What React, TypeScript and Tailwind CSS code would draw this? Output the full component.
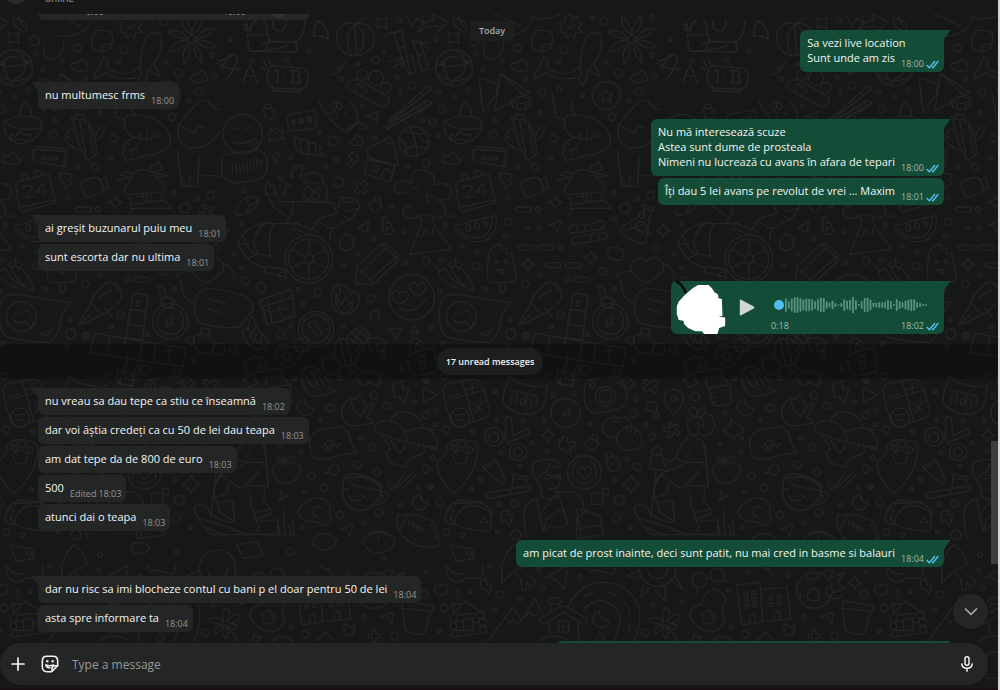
import React from "react";

type Circle = [number, number, number];

const spark = (x: number, y: number, s: number) => {
  const k = Math.round(s * 0.25);
  return `M${x} ${y - s}Q${x + k} ${y - k} ${x + s} ${y}Q${x + k} ${y + k} ${x} ${y + s}Q${x - k} ${y + k} ${x - s} ${y}Q${x - k} ${y - k} ${x} ${y - s}Z`;
};

/* Each sheet of the wallpaper is drawn at three times its final size. */
const topCircles: Circle[] = [
  [209, 62, 7], [319, 118, 6], [162, 154, 6], [137, 180, 11], [83, 193, 6], [438, 162, 6], [517, 183, 6],
  [562, 144, 11], [701, 149, 11], [787, 55, 6], [822, 64, 12], [828, 184, 6], [686, 183, 6], [459, 209, 6],
  [585, 238, 6], [638, 278, 11], [687, 266, 6], [865, 219, 12], [966, 164, 6], [202, 231, 6], [247, 257, 11],
  [211, 278, 6], [34, 237, 6], [415, 269, 6], [373, 291, 6], [328, 276, 6], [758, 286, 6], [926, 274, 11],
  [897, 302, 6], [976, 230, 6], [372, 203, 55], [829, 286, 42], [905, 118, 10], [96, 225, 16], [138, 234, 22],
  [168, 263, 16], [967, 50, 6], [434, 122, 15], [338, 188, 6], [408, 188, 6], [765, 149, 1],
];
const topPaths: string[] = [
  "M75 72C40 60 18 85 20 115C22 150 50 170 80 166C115 165 135 140 132 110C128 80 105 65 75 72ZM75 72C50 90 45 140 66 166M75 72C75 110 78 140 80 166M75 72C110 90 110 140 80 166M70 72Q85 62 104 74M88 66Q95 50 116 54",
  "M0 228Q35 215 46 186Q40 200 20 206",
  "M140 53Q156 62 172 53Q164 70 172 85Q156 78 140 85Q147 70 140 53Z",
  "M355 97Q371 106 388 97Q380 114 388 130Q371 123 355 130Q362 114 355 97Z",
  "M228 42L245 76L262 55L283 70L275 42M262 97Q280 60 312 62L310 42L352 66L325 94L322 78Q290 76 262 97Z",
  "M368 58Q372 84 400 92Q416 90 408 76Q395 50 368 58ZM382 42L400 78",
  "M160 112Q185 95 215 92L240 220L258 216L246 165L228 170M215 92L192 100L205 145L222 140M205 145L236 225L240 220M246 122L264 165L282 158L268 125ZM264 165L275 214L294 206L282 158M246 122L298 130L268 125L296 145M178 185L218 172L190 202L224 184L212 206",
  "M318 190Q370 212 426 180M325 225Q380 260 424 225M338 188Q345 230 372 257M408 188Q400 160 372 148M338 188Q370 150 408 188M352 250Q410 230 408 188",
  "M463 127Q462 150 460 165Q472 185 500 174Q522 160 522 120M490 42Q540 60 570 78M500 108Q560 115 590 85Q605 70 608 42M608 52Q650 65 690 42",
  "M620 92Q665 85 668 108Q670 135 652 152Q622 158 608 145Q596 110 620 92ZM636 152Q634 130 668 130",
  "M722 42L728 58L744 48L742 66L758 72L746 84L756 98L738 98L734 116L722 104L710 114L706 98L688 96L698 82L688 68L704 66L706 50ZM712 80L720 86L734 74",
  "M905 105Q868 80 876 48Q900 70 905 105ZM905 105Q910 70 934 46Q940 85 905 105ZM915 115Q945 80 976 86Q955 115 915 115ZM915 120Q955 118 978 140Q945 155 915 120ZM910 128Q938 150 936 188Q910 165 910 128ZM900 128Q905 165 882 190Q872 150 900 128ZM895 120Q875 155 838 154Q850 120 895 120ZM895 115Q855 118 834 94Q870 85 895 115Z",
  "M750 200C720 232 680 220 652 204L653 194Q655 178 640 170Q636 190 626 205Q612 220 612 235Q635 230 652 218L656 228Q700 242 745 232Q750 250 758 258Q775 230 772 212Q820 170 814 105Q800 88 770 110Q752 150 750 200ZM790 190Q805 210 808 228Q790 225 776 208M750 190L754 230",
  "M552 210Q542 205 544 196Q548 185 562 190Q570 174 585 182Q592 190 588 196Q598 202 592 212Q560 216 552 210Z",
  "M910 245Q900 240 904 230Q910 222 920 224Q930 206 944 216Q950 222 946 228Q956 232 950 242Q925 252 910 245Z",
  "M448 234L504 252L498 285L458 334ZM448 234L458 325M512 220L600 278L494 332ZM512 220L580 285M544 302C544 285 602 285 602 302L598 322Q572 334 548 322ZM544 302Q572 318 602 302M560 312L560 326M586 312L586 326",
  "M66 240Q48 245 54 268L150 318Q170 325 176 308Q182 292 165 285L88 240ZM75 262C72 250 90 248 92 262C100 252 115 262 108 275L92 290Q76 278 75 262Z",
  "M178 358L295 258Q306 256 304 268L186 362ZM166 382L292 303Q306 300 304 314L172 388ZM238 308L252 322M270 280L282 292M232 340L242 352M262 322L270 334",
  "M828 268L834 280L848 282L838 292L842 305L828 298L816 305L818 292L808 282L822 280Z",
];
const leftTopPaths: string[] = [
  "M741 104L807 104L806 132L798 145L790 152L748 154ZM752 104Q748 65 770 62M800 104Q805 75 790 64M752 86Q738 95 730 85M741 68L741 92M728 72L752 90M818 62Q815 92 840 92Q860 88 858 62M786 138Q795 125 810 124L886 125Q915 110 915 62M886 125L893 155L748 154M860 138Q820 150 790 152",
  "M656 184Q685 175 700 162L710 168M688 162L672 192Q660 205 665 210M650 190Q690 215 722 205M714 172Q700 220 676 240M728 246L750 192L772 246M736 230L764 228",
  "M820 198Q804 200 802 225Q800 260 820 264L906 268Q922 262 924 235Q924 208 905 204ZM820 264L818 272L900 276L904 268M790 184L800 200M808 180L812 192M786 204L796 208M824 216L834 210L832 248M870 214L880 210L876 250M884 214Q904 206 900 224L892 230Q906 236 898 250L882 248M852 222L852 224M850 244L850 246",
  "M942 110Q940 70 955 62Q985 80 985 120Q965 100 942 110Z",
];
const middleCircles: Circle[] = [
  [635, 28, 11], [577, 61, 6], [607, 66, 11], [795, 61, 6], [930, 37, 6], [1146, 51, 11], [971, 114, 11],
  [789, 104, 11], [624, 107, 6], [435, 115, 6], [310, 123, 15], [269, 98, 6], [397, 18, 6], [183, 172, 6],
  [319, 179, 6], [287, 200, 6], [532, 198, 6], [588, 190, 11], [963, 172, 6], [914, 201, 11], [862, 202, 6],
  [152, 234, 6], [44, 273, 6], [484, 318, 6], [326, 247, 15], [832, 295, 6], [923, 328, 7], [669, 348, 6],
  [645, 373, 6], [835, 367, 11], [893, 384, 6], [928, 384, 6], [824, 406, 6], [989, 442, 7], [694, 439, 6],
  [741, 457, 6], [588, 482, 11], [525, 490, 6], [633, 479, 6], [739, 498, 11], [522, 396, 6], [430, 417, 6],
  [383, 462, 6], [341, 498, 6], [36, 370, 6], [13, 462, 6], [36, 502, 6], [46, 543, 11], [93, 562, 15],
  [205, 569, 6], [263, 578, 11], [220, 611, 6], [423, 596, 11], [435, 646, 15], [341, 675, 6], [182, 677, 6],
  [152, 704, 12], [453, 741, 15], [604, 682, 6], [554, 690, 11], [630, 573, 6], [766, 567, 6], [886, 552, 11],
  [931, 524, 6], [1010, 538, 7], [1118, 514, 11], [1153, 568, 6], [991, 645, 11], [963, 680, 6], [840, 659, 6],
  [842, 701, 15], [887, 707, 6], [1072, 703, 6], [1202, 722, 11], [1246, 700, 15], [1287, 747, 18], [1152, 278, 6],
  [1222, 296, 6], [1184, 324, 15], [1153, 357, 6], [1278, 444, 11], [1262, 286, 11],
  [551, 124, 45], [236, 477, 72], [236, 477, 60], [236, 477, 14], [545, 592, 68], [694, 650, 45], [258, 687, 53],
  [258, 687, 42], [1141, 664, 53], [1141, 664, 40], [1132, 608, 14], [257, 288, 12], [438, 204, 9], [1236, 345, 9],
  [1233, 380, 16], [1053, 385, 13], [1094, 412, 13], [158, 528, 12], [38, 102, 59], [761, 173, 6], [779, 174, 6],
  [797, 175, 6], [472, 386, 3], [1256, 398, 3],
];
const middlePaths: string[] = [
  "M6 88Q14 76 26 92M46 90Q54 76 66 86M10 126Q40 140 78 112M60 128L74 148Q88 146 84 130L76 116M72 128L78 138",
  "M-25 170Q-20 160 85 150Q115 160 112 200Q110 232 85 238L20 250Q-10 245 -25 225ZM8 200L8 216M18 190L20 220M28 192L32 222M38 188L42 218M48 178L53 214M58 178L62 210M68 176L72 210M78 172L82 206M88 178L90 200M96 180L98 196",
  "M100 26L104 52Q115 60 132 54L132 26ZM106 26Q105 8 122 14L126 26",
  "M180 42L248 30Q258 34 260 72Q258 84 248 86L186 92Q172 85 172 60Q172 44 180 42ZM190 56L190 74M182 60L198 70M198 60L182 70M214 52L214 72M206 56L222 68M222 56L206 68M238 48L238 68M230 52L246 64M246 52L230 64",
  "M265 0Q290 60 345 96L385 62Q380 20 358 0M325 10Q318 14 320 24Q330 34 338 20Q332 0 314 8Q306 30 322 40M345 96L352 96L384 68L408 76L408 86L388 88M302 18L296 18M304 36L298 40M322 46L322 52M342 38L348 42",
  "M120 84L130 92L140 82L148 92L162 96L155 106L162 118L148 118L140 126L130 118L118 122L120 108L112 100L124 98Z",
  "M192 110Q196 160 216 160L282 168L268 154L274 142L256 142L256 128L238 130L232 118L214 120ZM216 160Q205 140 214 120M232 168Q240 145 232 118M250 168Q262 155 256 142",
  "M360 128Q362 118 374 116Q372 106 382 102Q388 112 390 112Q400 116 396 122Q404 130 394 136L372 136Q358 135 360 128Z",
  "M405 50L444 34L440 66L430 52Z",
  "M466 82L590 0M470 88L604 8M484 60Q470 66 480 58L566 0M520 60L530 70M546 42L556 52M570 22L582 32",
  "M640 65Q636 115 690 132Q745 125 755 82L750 58Q700 35 640 65ZM640 65Q690 100 755 82M690 40Q688 20 706 6Q730 28 722 48Q705 56 690 40ZM662 124L664 100L676 110L690 94L706 106L722 100L720 124M672 120Q692 112 710 122M686 76L686 78M704 82L704 84M726 76L726 78",
  "M730 148L833 155L826 200L734 184Q726 165 730 148ZM733 142L742 140L833 148M833 155L826 155L820 198",
  "M848 60Q870 48 896 70Q920 110 920 160Q905 180 890 178Q868 150 848 60ZM868 58Q880 120 890 178M896 70Q905 120 912 170M846 60L844 50L856 52L858 40L870 46L882 42L880 58M848 86Q835 78 824 114Q832 142 872 150M920 120Q935 120 946 82Q930 70 924 90L916 110M828 108L840 116",
  "M966 -20L975 25L978 52L1005 58L1010 45L1040 45Q1015 30 1030 -5M1040 45Q1120 50 1142 115Q1140 150 1100 160L1008 182Q995 170 1000 140Q1015 115 1040 112Q1075 125 1110 105M1005 58Q995 90 1030 112M1030 170L1020 150L1040 145L1038 135M1050 120L1048 95M1070 120L1072 92M1085 110Q1100 95 1112 96",
  "M408 150L470 116L466 126L478 108L490 124Q496 150 505 198L412 172Q420 165 408 150ZM412 172L404 222L482 245L495 195M454 232Q458 205 472 206Q485 210 480 242M465 120L472 134L490 124M418 178L422 182L426 178L430 184L436 180L440 186L446 182L450 188L458 186L462 190L470 188L476 194L484 192",
  "M514 90Q555 105 592 100M540 82Q560 120 562 168M580 92Q560 120 595 128M520 155Q545 128 592 145M508 116Q530 125 530 165",
  "M640 188Q634 178 642 170Q650 164 658 168Q664 152 678 162Q682 168 680 172Q692 176 688 190Q660 194 640 188Z",
  "M126 166L136 192Q144 196 142 184L138 176L152 164Q148 154 126 166ZM355 168L368 180L352 192L360 202L384 180Q388 162 366 158Z",
  "M186 226L192 196L220 196L214 228M192 204L218 204M186 226Q178 222 180 230Q186 236 188 226M214 228Q206 224 208 232Q214 236 214 228M164 284L170 250L182 262M164 284Q158 278 158 286Q162 292 164 284",
  "M372 248L382 242L393 254L404 242L412 252L402 262L413 272L404 282L393 272L382 282L373 272L384 262Z",
  "M116 290Q105 275 106 256L114 244L120 258L130 256Q140 290 150 305L240 305M240 305L310 308L320 340Q270 350 262 362L245 390M190 308L185 340L166 372M116 290Q120 320 166 345M106 280Q130 290 134 276M228 250Q215 235 228 222Q250 212 262 222Q282 226 276 246Q300 262 288 280Q300 292 286 302L262 308Q234 304 222 286Q218 262 236 262L250 275L268 262M236 262Q228 255 232 246L262 250",
  "M320 340L332 290L382 300L390 324L362 358L344 350M332 290L346 308L378 306M306 380Q300 400 300 420M262 362L304 388L355 360M390 324L350 335",
  "M22 430L38 404Q70 365 130 370L205 372L264 396L258 408L180 384M22 430L50 475Q80 500 110 504L160 505M22 430L48 432L70 460L128 470M38 404L50 430M130 370Q110 420 122 470M50 475L86 462L70 430Q80 380 110 368M100 515L165 532Q175 515 160 508L108 498ZM190 376L200 366L212 378",
  "M236 463L236 417M249 470L288 448M249 485L290 505M236 491L236 537M223 485L184 505M223 470L184 448",
  "M16 340Q20 310 50 292Q80 290 86 300Q80 330 50 340Q25 352 16 340ZM50 292L58 318L86 300M58 318L50 340",
  "M414 312L432 300L454 312L448 332L430 336ZM434 300Q435 286 446 292Q455 298 450 308M456 366L462 402Q475 408 490 396L482 370ZM458 366Q452 350 464 350Q476 356 474 370M384 384L416 364L412 396L398 390Z",
  "M330 420Q345 415 342 402L358 404L372 420L364 432L374 442L350 452L328 444Q335 434 330 420Z",
  "M380 500L450 434Q470 424 500 460Q508 475 500 484L432 552L376 554ZM376 554L380 500L395 515L398 520L412 525L420 540L432 552M398 512L465 445M425 535L500 470M450 434L465 440L500 475M384 545L390 552",
  "M535 276Q490 290 492 258Q506 234 545 250Q540 210 578 210Q622 215 612 255Q655 240 666 275Q662 305 625 300Q655 320 645 345Q620 362 608 345L572 345Q540 365 520 345Q515 310 545 320M590 288Q610 282 620 300M590 288Q590 305 600 312M545 265Q560 265 565 270M572 345L574 372L540 463L665 448L610 372L608 345M562 408L574 412L586 388L598 402L612 402L606 380",
  "M676 248L776 222L796 300L796 308L696 336L688 322ZM688 322L796 300M698 242Q688 225 704 222Q718 226 714 238M738 232Q730 212 746 212Q758 218 754 228M697 264Q712 248 726 262Q728 270 706 292L730 288M758 250L738 278L768 272M758 250L764 285",
  "M810 218L846 224L838 242L848 245L824 268L824 248L812 245Z",
  "M872 250Q876 240 920 232Q935 234 940 270Q938 280 892 292Q880 290 872 250ZM932 240L946 230L955 264L942 268",
  "M1003 265Q1018 250 1030 218Q1060 200 1088 218Q1108 245 1126 262L1124 276L1006 285ZM1020 288L1026 325M1114 280L1118 306M1020 325L1145 325L1124 300L1020 315M1030 325L1014 348M1090 218Q1070 188 1100 195L1104 182L1118 208L1090 216L1134 228L1100 230M1030 222Q1002 210 990 225L1020 232L980 240L1000 250M1056 275L1062 304L1084 300L1080 274M1058 290L1082 288M1070 275L1072 304M1040 290L1052 288",
  "M1212 20L1165 75L1212 100L1225 80L1245 85M1165 75Q1155 120 1195 145L1240 140Q1280 120 1290 90M1162 150L1172 230L1190 260L1222 258L1228 165M1172 230Q1168 260 1190 260M1200 222L1198 256M1228 225L1290 228M1212 20Q1220 0 1255 0Q1260 20 1290 30",
  "M862 322L902 322Q908 328 902 336L862 336Q852 329 862 322ZM868 436L906 436Q914 443 906 450L868 450Q856 443 868 436ZM928 436L966 436Q974 443 966 450L928 450Q916 443 928 436ZM950 488L988 488Q998 495 988 503L950 503Q938 495 950 488ZM1012 488L1050 488Q1060 495 1050 503L1012 503Q1000 495 1012 488ZM1034 532L1072 532Q1084 539 1072 546L1034 546Q1022 539 1034 532Z",
  "M1038 374L1025 376Q1012 385 1022 400L1042 398M1066 376L1118 362Q1128 372 1120 386L1064 396M1080 404L1032 412Q1020 420 1030 434L1082 425M1106 402L1128 398Q1136 406 1128 416L1108 420",
  "M958 374L998 360L980 396L976 380Z",
  spark(976, 308, 20), spark(894, 494, 20), spark(1083, 474, 20), spark(1300, 392, 20),
  "M672 378L798 346Q806 405 760 424Q705 432 672 378ZM684 384Q714 425 762 408Q788 392 786 352M710 390Q705 375 716 374Q726 382 720 394ZM736 384Q732 368 742 368Q752 376 746 388ZM762 378Q756 362 766 362Q774 372 768 380Z",
  "M776 465Q780 434 812 434L816 446L828 446L832 462L845 460L850 475L860 535Q850 548 820 548L780 546Q770 540 772 510ZM808 550L810 575Q818 586 826 572L825 548M795 480L806 486L796 492M830 478L820 484L832 488M800 508Q812 514 826 506M806 512Q808 524 820 520L820 510",
  "M656 492Q668 480 675 488L678 466M656 492L664 504L676 496L688 506L696 496Q690 480 675 488M664 504Q680 550 728 574Q735 550 690 500M628 512Q622 530 640 538Q660 562 690 565M628 512L648 506L654 520Q670 545 700 560M628 512L616 500",
  "M322 550Q300 570 304 610Q315 642 350 644Q385 636 388 595Q384 575 372 572Q368 580 364 584Q355 555 322 550ZM322 550Q340 575 322 590L318 582Q312 625 345 640Q370 630 368 605L358 612Q355 595 345 590Q345 600 332 615Q325 605 322 590",
  "M95 598L184 568L198 650L110 674ZM95 598Q85 602 92 622L188 592M112 592L126 668M152 580L158 605M92 622Q95 635 110 632Q125 640 145 628Q150 625 155 622Q160 632 176 624M100 640L110 674M148 622Q148 650 165 652Q190 650 188 630",
  "M486 590C482 574 502 562 508 582C520 566 542 578 532 596L512 612Q490 605 486 590ZM538 564C536 548 556 540 562 558C574 542 594 552 586 570L568 588Q542 578 538 564ZM504 622Q550 650 586 598",
  "M640 592Q655 580 700 586L840 608L815 645Q808 710 780 726Q740 732 650 710Q625 690 628 640Q630 605 640 592ZM676 640Q684 628 692 642M706 636Q714 626 720 638M668 655Q685 685 724 650M708 668L720 684Q732 678 728 665M748 696L756 705L768 690M760 700L768 708L788 684",
  "M908 595Q910 580 955 546Q985 545 995 575Q1000 600 980 610L945 642Q935 646 905 610ZM905 606Q895 618 890 632L865 672L872 674Q905 660 940 642M870 670L898 645M970 550L990 570M948 625Q960 640 962 650M925 595Q945 580 960 570",
  "M1030 578L1074 586L1054 742L1042 840L1005 835L1014 760M1030 578L1002 736M1022 628L1066 634M1014 672L1060 680M1006 712L1056 720M900 760L914 700L1186 745L1178 800L896 758M960 708L952 766M1098 730L1090 786M1142 738L1134 792M1044 598L1040 620L1050 618M1036 604L1052 606",
  "M1118 592Q1100 575 1104 558Q1114 550 1124 570L1130 594M1150 650L1145 672L1128 680L1132 660ZM1120 618Q1100 600 1122 592L1146 592Q1158 606 1146 620",
  "M1204 510C1198 480 1228 462 1250 484C1270 462 1306 478 1300 512Q1280 535 1252 548Q1215 535 1204 510ZM1158 524L1204 512M1158 524Q1178 540 1176 575Q1195 608 1215 610M1238 568Q1290 560 1365 590Q1400 610 1385 635Q1362 660 1352 680Q1300 690 1230 668Q1205 640 1220 585ZM1252 595L1310 612M1252 625L1290 638M1330 545Q1340 510 1300 490",
  "M1240 312L1270 324L1266 334L1240 324ZM1244 328L1240 345M1262 334L1255 375L1248 428Q1235 440 1168 398Q1168 385 1180 378L1232 345M1180 395L1245 372M1200 376L1240 398",
  "M1142 440L1154 444L1160 440L1168 448L1182 452L1176 480Q1155 485 1134 470Q1130 455 1142 440Z",
  "M38 690Q42 735 80 748Q110 748 116 725L96 700Q75 680 70 652Q60 650 56 675L52 690Q42 675 38 690ZM56 675Q52 700 68 702M75 685L60 710L70 722M84 695L72 718L84 730M96 706L88 724L100 736",
  "M236 680Q232 665 256 664L272 694Q278 708 262 708L240 680M262 648L262 650M282 658L282 660M292 686L292 688M286 712L286 714",
  "M318 780Q305 735 330 715L350 720Q360 690 385 683Q415 680 418 705L400 745L372 790Q340 810 318 780M330 715L345 790M350 720L365 785M365 700L405 732M378 690L415 712M360 715L398 742M400 685L365 735M412 695L380 750",
  "M475 685L518 688L496 718L490 700Z",
  "M160 800Q132 770 138 750Q145 735 165 732L190 745Q205 735 215 740L222 748L204 775Q195 805 160 800M165 732L150 750M178 738L160 765",
];
const bandCircles: Circle[] = [
  [45, 6, 6], [127, 40, 6], [332, 12, 15], [378, 18, 11], [556, 120, 15], [440, 137, 6], [5, 120, 6], [134, 138, 10],
  [80, 153, 6], [284, 184, 6], [322, 50, 6], [64, 86, 10], [620, 60, 6], [650, 130, 11], [700, 90, 6], [820, 60, 11],
  [900, 110, 6], [980, 80, 11], [1060, 130, 6], [1120, 70, 6], [1180, 115, 11], [1270, 80, 6],
];
const bandPaths: string[] = [
  "M24 80Q26 70 92 54Q100 52 104 62L112 118Q112 126 102 128L48 138Q36 138 32 128L22 92ZM36 74Q22 40 40 26Q62 20 74 58M48 68Q40 46 50 40Q60 44 62 64M64 96L60 118L76 114L68 94",
  "M500 85L478 160L516 168L530 105M480 130L524 138",
  "M700 20Q740 0 760 30Q770 60 740 70Q700 70 700 20ZM850 100Q880 70 920 90L910 125L862 130ZM1000 30L1040 20L1050 60L1010 66ZM1090 90Q1120 70 1140 100Q1150 130 1110 136Q1080 120 1090 90ZM1220 30Q1250 10 1280 40Q1270 70 1235 66Z",
];
const lowerCircles: Circle[] = [
  [18, 105, 6], [16, 147, 6], [49, 165, 11], [8, 248, 6], [4, 334, 6], [29, 383, 11], [194, 49, 6], [199, 133, 6],
  [127, 171, 6], [278, 137, 6], [341, 137, 6], [433, 55, 6], [369, 60, 6], [305, 203, 6], [213, 234, 6], [351, 228, 6],
  [270, 275, 6], [153, 315, 7], [123, 343, 6], [208, 388, 6], [254, 386, 11], [50, 472, 11], [203, 469, 6],
  [258, 480, 15], [478, 147, 6], [611, 116, 11], [617, 73, 6], [648, 149, 6], [592, 251, 6], [621, 276, 11],
  [554, 314, 6], [568, 376, 15], [560, 431, 12], [600, 457, 6], [796, 65, 12], [885, 114, 6], [1020, 99, 11],
  [991, 133, 6], [870, 208, 6], [932, 230, 6], [964, 302, 11], [1002, 339, 11], [943, 351, 6], [1102, 269, 11],
  [1144, 216, 11], [1112, 187, 6], [1191, 94, 11], [1152, 61, 11], [1274, 82, 6], [1307, 120, 11], [1307, 282, 11],
  [1161, 291, 11], [1285, 338, 6], [1233, 390, 6], [1168, 412, 12], [1122, 444, 6], [1050, 420, 11], [936, 457, 6],
  [913, 11, 6], [1032, 285, 15], [98, 480, 7], [1320, 336, 6], [407, 114, 44], [526, 64, 30], [526, 64, 20],
  [488, 33, 8], [731, 71, 8], [463, 292, 50], [191, 186, 28], [191, 186, 15], [264, 231, 26], [264, 231, 13],
  [91, 246, 21], [73, 218, 9], [98, 207, 11], [121, 226, 9], [73, 206, 9], [89, 128, 29], [678, 122, 8], [547, 267, 2],
  [154, 442, 2], [170, 440, 2], [162, 430, 2], [1070, 342, 3], [1122, 364, 3], [1306, 18, 6], [1048, 8, 6],
];
const lowerPaths: string[] = [
  spark(354, 180, 20), spark(603, 328, 27), spark(592, 25, 27),
  "M52 26L138 12Q155 12 178 100Q180 125 160 130L85 156Q60 150 40 60Q38 35 52 26ZM96 15L130 135M45 78L165 45M126 24L128 56M110 44L144 36M54 68L88 56M132 84L160 112M156 80L136 115M76 122L104 116M76 136L106 132",
  "M238 4L262 22Q295 30 322 36L352 30L345 75Q340 110 300 118Q240 115 222 85Q215 60 228 38ZM240 46L262 48L256 88M262 50L290 55L288 108M290 55L320 62L318 92M246 60L240 90M270 84Q272 60 285 75Q284 100 270 84M300 65L304 100M240 88Q235 100 240 104",
  "M362 114Q365 76 402 70M420 98Q408 104 400 120L412 124Q424 112 420 98ZM424 84L424 86M436 98L436 100M440 116L440 118M434 134L434 136",
  "M470 22Q480 8 560 8Q592 15 590 80Q585 105 500 114Q470 112 464 80Q460 40 470 22ZM382 -14L430 -6L428 34L384 26Z",
  "M640 18L650 12L662 24L676 12L686 22L674 34L685 44L674 54L662 42L650 52L640 42L652 32Z",
  "M732 120Q700 85 702 65Q705 45 732 44Q760 46 760 72Q756 90 732 120ZM654 80L684 86L678 112L648 104ZM658 184L670 174L680 188L664 198Z",
  "M832 8Q820 25 836 40L848 88Q870 98 905 82L900 30Q890 15 880 8ZM836 40L900 28M840 55L850 54M844 70L858 68M850 82L858 80M832 8L828 -14L868 -20L880 8M760 10L790 0L802 26L778 38Z",
  "M936 0Q935 50 975 66Q1010 60 1038 48L1018 38Q1030 20 1010 12L975 -22Q945 -30 936 0M948 0Q950 25 975 35L995 45M970 5L985 30M985 2L1002 30M1102 0Q1100 25 1122 32L1138 22L1160 32Q1178 20 1168 0Q1130 -20 1102 0",
  "M942 72Q920 82 922 102Q935 125 958 120Q970 112 970 98Q950 105 942 72ZM1290 358Q1265 365 1268 390Q1280 408 1300 404Q1312 395 1314 380Q1295 388 1290 358Z",
  "M1080 68Q1058 85 1054 115Q1060 155 1100 152L1145 145Q1150 130 1130 128L1152 90Q1145 80 1128 95L1112 58Q1102 55 1100 72ZM1080 68L1090 100M1128 95L1115 120M1090 100L1115 125M1208 28L1240 18L1238 42L1258 40L1240 86L1232 66L1214 68ZM1298 36L1340 60L1302 84Z",
  "M1150 168Q1155 130 1205 138Q1250 152 1252 202L1208 190ZM1202 140Q1210 110 1245 110Q1290 118 1298 158M1250 170Q1280 152 1335 165M1252 202L1335 218M1175 178L1200 220L1188 230L1198 262L1245 276L1260 250L1300 235Q1310 220 1300 212M1198 190Q1215 215 1225 232Q1245 230 1244 205M1280 225Q1290 210 1285 205M0 165Q25 190 22 225L0 220",
  "M228 126Q236 120 244 128L250 182L292 162Q300 168 296 178L240 200L235 206L226 190ZM218 190L226 188",
  "M386 196L398 196L398 184L412 188L412 202L436 200L434 216L420 220L424 232L410 234L406 222L390 224Z",
  "M460 205L484 188L506 204L490 230ZM484 188Q488 175 500 180Q506 188 500 198",
  "M560 188Q520 190 517 158Q522 128 560 126L568 130L585 126Q600 132 605 152M560 190Q565 160 605 152Q640 170 636 210Q620 228 590 226Q558 218 560 190ZM555 140L560 132M566 142L570 134M590 170L596 160M602 172L606 160M614 176L618 166",
  "M50 210Q65 190 105 195Q145 200 143 225Q138 300 72 356Q20 310 20 255Q55 250 50 210Z",
  "M156 275L198 250L226 318L214 328L204 318ZM162 282L200 256M168 355L300 332Q305 345 288 350L176 370Q165 365 168 355ZM246 340L250 296L262 298L270 305L288 302L290 325M250 312L288 312M240 345L245 358",
  "M322 320Q300 295 310 265Q340 245 385 258Q395 278 382 278Q350 265 350 290L330 300L322 320ZM350 290L358 268M345 302Q355 296 365 306L390 298M340 308Q350 316 362 308M370 310Q385 310 392 298L388 330Q375 345 355 340M325 312Q322 325 330 330L336 366Q355 380 380 366L380 340M336 366L320 370Q285 380 280 420L290 490M384 350L430 350Q462 370 462 400L440 405L455 490M320 372L340 470L350 430L400 400L415 450L378 460L362 450L345 470M340 405L384 350L412 450M440 462L520 448M440 425L470 408L510 425L522 480L440 490ZM455 430L455 405L470 408",
  "M444 295C438 275 458 268 463 285C470 268 488 275 484 295L464 312ZM430 310Q420 275 445 258M496 310Q505 275 482 258M440 320Q465 330 486 320",
  "M526 250L546 244L562 250L570 276Q560 288 540 290ZM530 248Q524 232 538 232Q552 236 548 246M484 356L518 354L518 388L486 388ZM518 342L536 340L536 358L518 358Z",
  "M776 108Q780 95 795 98Q805 108 798 124Q780 122 776 108ZM802 122Q805 98 825 98Q832 115 812 124M774 136Q790 120 818 130L820 160M774 136L772 160Q778 170 782 180L802 182L806 165M802 140Q812 145 804 155M820 118Q850 112 854 150Q845 190 808 180M774 185L772 192M800 190Q825 195 826 220L835 335L770 330L750 340L694 300L705 288M774 192Q745 205 738 250L762 262L785 215M738 250L716 262L690 235L682 240M762 262L822 262M806 290Q780 320 755 338M760 270L700 292Q670 310 672 360L690 412L735 440M820 210Q832 250 828 270Q820 280 815 260",
  "M668 222L684 212L696 222L692 240L666 240ZM665 240L658 280L718 288L692 250M678 290L662 425M694 300Q670 325 672 360M715 330L712 352L678 368L680 384L728 376L732 420Q738 440 720 444L665 422L650 395Q610 380 612 408L630 432L702 452L770 478L862 478M778 342L784 390L800 440L862 435L864 478M824 342L822 380L842 402L792 412M800 430L845 418L842 402M800 440Q815 460 795 475M612 408Q640 460 665 478L920 480M862 430L870 478M880 404L885 478M895 450L902 478M908 430L910 478M640 455L700 478",
  "M712 142L722 160L700 158L702 170L720 170L712 186L724 188L730 172L744 182L750 170L734 164L748 152L736 148L728 156L724 142Z",
  "M880 162L900 152L902 134L940 160L938 175L924 176L912 192L902 185ZM922 178L942 196L936 184",
  "M980 166L1050 154Q1075 162 1082 200L1100 232L1060 238Q1000 258 975 252Q955 230 960 190ZM996 218Q1025 180 1030 205Q1020 232 1010 222Q1020 200 1040 215L1054 205",
  "M890 268Q860 250 848 282Q850 315 880 325Q920 325 932 285Q930 255 890 268ZM884 268L882 242M888 258Q900 238 914 246Q905 265 888 258M880 258Q870 240 858 244Q862 260 880 258",
  "M1062 310Q1075 292 1100 298Q1160 308 1175 335Q1165 405 1105 408Q1045 395 1062 310ZM1072 308Q1080 340 1172 346Q1165 315 1110 305ZM1172 350Q1198 350 1192 366Q1180 390 1155 390M1168 362Q1185 358 1178 370L1162 380M1074 362Q1085 385 1112 374M1003 295L1018 290",
  "M1194 318L1212 338L1248 294M1212 338L1206 344L1192 330M1234 342L1282 296M1218 340L1266 294",
  "M868 348L894 362L866 378L876 364ZM948 380Q970 365 1005 372Q1025 385 1018 415L1025 440Q1005 460 980 440Q945 445 925 420Q918 400 948 380ZM995 400Q975 388 965 405Q965 425 985 424M1052 462L1090 446L1078 486L1072 468Z",
  "M46 442Q45 395 72 385L150 382Q185 395 186 420L180 468Q150 472 72 450ZM72 450Q80 400 120 392Q165 390 186 420M72 385Q90 370 105 378Q120 370 135 380Q150 374 162 386M46 420L62 398L72 410L60 430L74 440L60 448M212 412L234 404L236 420L248 418L240 456L230 440L218 440Z",
  "M1222 422Q1280 408 1335 445Q1350 490 1345 515Q1280 520 1250 495Q1215 465 1222 422ZM1250 422L1232 460M1258 444L1300 465M1260 438L1256 452M1272 440L1268 458M1284 448L1280 464M1296 454L1290 470M965 495Q1005 455 1040 495Q1030 525 1000 525Q970 520 965 495M1120 495Q1160 440 1215 495Q1210 530 1165 535Q1125 530 1120 495M1165 470L1165 495M1140 480L1165 470L1190 480M0 450Q15 460 18 495",
];
const bottomCircles: Circle[] = [
  [121, 79, 6], [208, 90, 11], [270, 102, 6], [327, 14, 6], [340, 71, 6], [452, 34, 6], [43, 129, 11], [195, 136, 6],
  [27, 197, 6], [668, 120, 6], [756, 111, 6], [897, 76, 6], [955, 20, 6], [1076, 31, 6], [1120, 154, 6], [904, 186, 6],
  [946, 207, 11], [1214, 215, 11], [1302, 88, 11], [646, 203, 11], [511, 220, 11], [1308, 20, 6], [1153, 76, 54],
  [808, 45, 22], [862, 30, 21], [836, 157, 20], [152, 150, 11], [70, 160, 11], [70, 184, 10], [158, 172, 11],
  [160, 195, 11], [75, 206, 11], [683, 10, 55], [180, 0, 6], [120, -40, 11], [330, -30, 7], [560, -40, 6], [900, -40, 11], [1180, -20, 6],
];
const bottomPaths: string[] = [
  "M48 0Q45 50 88 52Q105 45 110 30M55 5Q65 30 100 28M110 40L150 38Q165 25 158 0M14 72Q20 55 34 62Q50 52 54 70Q55 85 32 92Q15 90 14 72ZM150 46L168 40L172 60L186 62L176 90L168 72L156 72Z",
  "M215 0L216 55L250 20M250 20L290 0M215 0Q225 -35 250 -60Q285 -40 290 0M250 20L272 40L276 76Q290 76 290 50L300 68L320 50L290 30M348 35L415 0L402 74L378 44Z",
  "M78 74Q90 84 80 92Q84 104 88 106M70 140L66 115L95 118M70 145L105 108L152 140M82 150L140 146M80 170L100 168M128 160L130 195L102 198L100 162ZM130 172L148 172M84 196L102 196M84 214L150 204",
  "M172 230L248 128L276 166L314 100L342 158M220 165L230 160L238 178L248 162L262 180L274 165M284 155L300 140L312 155L325 142",
  "M355 100Q372 94 390 100Q396 112 388 116L360 116Q350 110 355 100ZM362 116L362 140M386 116L386 124M330 160L395 124Q402 120 410 125L470 162Q476 175 462 178L400 142L340 178Q325 175 330 160ZM356 172L358 212M444 172L446 230M386 168L416 168L416 202L386 202ZM400 168L400 202M386 185L416 185M322 230Q365 200 415 225",
  "M415 122Q445 60 510 52Q600 50 628 130Q635 180 610 230M462 135Q480 105 520 108Q570 120 571 170L552 230M462 94L490 82M528 80Q545 85 560 94M584 112Q598 130 600 145M600 178L592 205M508 138Q485 145 488 170Q500 190 525 186Q540 178 540 162Q510 175 508 138Z",
  "M630 15L590 32L638 42M638 60L633 98L660 68M672 70L706 108L706 66M728 50L758 72L738 35M655 20Q660 45 690 40Q712 35 714 5M470 0L480 20L500 15L550 28L558 0",
  "M702 172Q690 140 708 128Q725 130 712 170Q735 140 750 150Q755 168 718 175Q745 175 740 190Q720 195 708 180Q720 215 705 220Q695 210 702 180Q685 210 672 206Q668 190 698 176Q655 180 658 160Q675 150 702 172ZM712 190Q735 205 742 230M785 230Q790 215 792 204L798 215L815 214L800 230",
  "M786 62L800 66L802 82M884 44L896 50L880 52M828 40L842 38M852 72Q885 80 888 110Q870 130 882 155Q885 190 845 202Q790 190 780 150Q780 125 815 118Q825 75 852 72ZM840 145Q852 150 850 165",
  "M920 60L990 52L998 170L936 180ZM995 74L1070 66L1082 162L998 170M942 82L952 81L953 92L943 93ZM965 78L976 77L977 88L966 89ZM944 100L954 99L955 110L945 111ZM966 98L977 97L978 108L967 109ZM945 120L955 119L956 130L946 131ZM968 116L978 115L979 126L969 127ZM1016 94L1028 93L1029 104L1017 105ZM1042 92L1053 91L1054 102L1043 103ZM1018 114L1028 113L1029 124L1019 125ZM1042 110L1053 109L1054 120L1043 121ZM960 178L958 150L974 148L977 175M1034 165L1032 140L1048 138L1051 164",
  "M1130 90L1148 68L1168 80L1164 106L1138 106ZM1125 32L1140 45L1158 42L1170 28M1100 75L1112 86L1110 105M1205 70L1190 66L1188 84L1202 98M1165 25L1210 12L1200 40L1244 22L1222 52L1245 70L1210 82M1190 96Q1230 110 1240 85",
  spark(1275, 54, 20),
  "M1168 156L1210 142L1205 178L1196 160ZM1240 108L1330 122L1328 138L1235 130ZM1238 132L1245 195Q1275 215 1305 205L1322 140",
  "M1072 178L1080 188L1094 182L1096 194L1086 198L1092 210L1080 212L1074 204L1066 212L1060 200L1068 194L1058 188ZM1146 194L1156 194L1158 206L1170 208L1168 218L1158 218L1158 232L1146 230L1148 218L1134 216L1134 206L1148 206ZM985 225L1005 202L1028 222M845 230Q880 200 910 230",
  "M1010 12L1028 28M990 0Q1005 20 1020 8M60 -60L120 -50L130 -20L80 -10ZM420 -60Q460 -80 480 -50Q470 -30 430 -35ZM740 -60L800 -70L820 -30L760 -20Z",
  "M0 300Q40 270 90 290L120 340M200 270L260 262L270 330L215 340ZM340 280Q380 240 430 280L420 340L350 340ZM600 270L650 250L690 310L640 340ZM820 260Q880 240 900 300Q880 340 830 330ZM1050 270L1120 262L1140 320L1060 330Z",
];

function Sheet({ x, y, circles, paths }: { x: number; y: number; circles: Circle[]; paths: string[] }) {
  return (
    <g transform={`translate(${x} ${y}) scale(0.33333)`}>
      {circles.map(([cx, cy, r], i) => (
        <circle key={i} cx={cx} cy={cy} r={r} />
      ))}
      {paths.map((d, i) => (
        <path key={i} d={d} />
      ))}
    </g>
  );
}

function Wallpaper() {
  return (
    <svg aria-hidden="true" className="absolute inset-0 h-full w-full">
      <defs>
        <g id="doodles" fill="none" stroke="#232525" strokeWidth="3.6" strokeLinecap="round" strokeLinejoin="round">
          <Sheet x={330} y={0} circles={topCircles} paths={topPaths} />
          <Sheet x={0} y={0} circles={[[690, 118, 6], [757, 181, 6], [859, 179, 6], [927, 153, 6], [860, 301, 1]]} paths={leftTopPaths} />
          <Sheet x={440} y={0} circles={[]} paths={leftTopPaths} />
          <Sheet x={230} y={100} circles={middleCircles} paths={middlePaths} />
          <Sheet x={400} y={330} circles={bandCircles} paths={bandPaths} />
          <Sheet x={430} y={375} circles={lowerCircles} paths={lowerPaths} />
          <Sheet x={430} y={565} circles={bottomCircles} paths={bottomPaths} />
        </g>
        <pattern id="wallpaper" width="440" height="800" patternUnits="userSpaceOnUse">
          <use href="#doodles" />
          <use href="#doodles" x="-440" />
        </pattern>
      </defs>
      <rect width="100%" height="100%" fill="url(#wallpaper)" />
    </svg>
  );
}

function Ticks() {
  return (
    <svg viewBox="0 0 39 27" className="h-[9px] w-[13px]" fill="none" stroke="#53bdeb" strokeWidth="4.4" aria-label="Read">
      <path d="M2 15L10 23L27 3M18 20L21 23L37 3" />
    </svg>
  );
}

function Stamp({ time, out, edited }: { time: string; out?: boolean; edited?: boolean }) {
  return (
    <span
      className={
        "flex shrink-0 items-center gap-[2px] text-[9px] leading-[12px] " + (out ? "text-[#a1b8af]" : "text-[#949595]")
      }
    >
      {edited && <span>Edited</span>}
      <time>{time}</time>
      {out && <Ticks />}
    </span>
  );
}

function Tail({ out }: { out?: boolean }) {
  return out ? (
    <span className="absolute top-0 left-full -ml-px h-[9px] w-[7px] bg-[#144d37] [clip-path:polygon(0_0,100%_0,100%_10%,15%_100%,0_100%)]" />
  ) : (
    <span className="absolute top-0 right-full -mr-px h-[9px] w-[7px] bg-[#242626] [clip-path:polygon(0_0,100%_0,100%_100%,85%_100%,0_10%)]" />
  );
}

type BubbleProps = { lines: string[]; time: string; out?: boolean; tail?: boolean; edited?: boolean };

function Bubble({ lines, time, out, tail, edited }: BubbleProps) {
  const last = lines[lines.length - 1];
  return (
    <li
      className={
        "relative max-w-[70%] rounded-[6px] pt-[5px] pr-[5px] pb-[7px] pl-[7px] text-[11px] leading-[15px] text-[#f3f5f4] " +
        (out ? "self-end bg-[#144d37] " : "self-start bg-[#242626] ") +
        (tail ? (out ? "rounded-tr-none" : "rounded-tl-none") : "")
      }
    >
      {tail && <Tail out={out} />}
      {lines.slice(0, -1).map((line) => (
        <p key={line}>{line}</p>
      ))}
      <div className="flex items-end justify-between gap-[6px]">
        <p>{last}</p>
        <span className="-mb-[5px]">
          <Stamp time={time} out={out} edited={edited} />
        </span>
      </div>
    </li>
  );
}

function Group({ items, out }: { items: Omit<BubbleProps, "out" | "tail">[]; out?: boolean }) {
  return (
    <ul className="flex flex-col gap-[2px]">
      {items.map((m, i) => (
        <Bubble key={i} {...m} out={out} tail={i === 0} />
      ))}
    </ul>
  );
}

const wave = [
  40, 22, 38, 46, 48, 40, 32, 38, 38, 34, 24, 34, 44, 42, 22, 14, 26, 12, 4, 12, 34, 26, 32, 50, 30, 6, 24, 42, 44, 32,
  14, 14, 18, 16, 20, 30, 24, 6, 36, 24, 16, 26, 32, 36, 34, 18, 12, 6, 6,
];

function VoiceMessage() {
  return (
    <article className="relative flex h-[53px] w-[273px] self-end rounded-[6px] rounded-tr-none bg-[#144d37] pr-[5px] pl-[3px]">
      <Tail out />
      <svg viewBox="0 0 156 160" className="h-[53px] w-[52px] shrink-0" aria-hidden="true">
        <path d="M5 1Q24 6 36 38" fill="none" stroke="#050505" strokeWidth="7" />
        <path
          d="M34 40L58 20L72 12L104 12L114 22L122 34L132 40L134 52L144 54L146 106L134 108L154 110L154 136L136 142L130 162L92 162L84 152L64 152L42 142L30 130L28 120L14 118L8 100L8 76L14 62Z"
          fill="#fff"
        />
      </svg>
      <button type="button" aria-label="Play voice message" className="ml-[13px] self-center">
        <svg viewBox="0 0 48 52" className="h-[17px] w-[16px]" fill="#d0d8d5">
          <path d="M2 3Q2 0 6 2L45 23Q48 26 45 29L6 50Q2 52 2 49Z" />
        </svg>
      </button>
      <div className="ml-[16px] flex min-w-0 flex-1 flex-col pt-[13px]">
        <label className="relative block">
          <input type="range" min="0" max="18" defaultValue="0" aria-label="Playback position" className="absolute inset-0 h-full w-full opacity-0" />
          <svg viewBox="0 0 480 66" className="h-[22px] w-[160px]">
            {wave.map((h, i) => (
              <rect key={i} x={42 + i * 8.75} y={33 - h / 2} width="5.4" height={h} rx="2" fill="#56947f" />
            ))}
            <circle cx="24" cy="33" r="15" fill="#53bdeb" />
          </svg>
        </label>
        <div className="mt-[4px] flex justify-between text-[9px] leading-[12px] text-[#a1b8af]">
          <span>0:18</span>
          <Stamp time="18:02" out />
        </div>
      </div>
    </article>
  );
}

export default function App() {
  return (
    <div className="flex h-screen overflow-hidden bg-[#161717] font-['Open_Sans','Noto_Sans',sans-serif]">
      <main className="relative flex min-w-0 flex-1 flex-col overflow-hidden">
        <Wallpaper />
        <header className="relative flex h-[14px] shrink-0 items-end gap-[17px] overflow-hidden bg-[#161717] pb-[10px] pl-[4px]">
          <span className="size-[24px] shrink-0 rounded-full bg-[#2a2c2c]" />
          <span className="text-[10px] leading-[12px] text-[#a0a1a1]">online</span>
        </header>

        <section className="relative min-h-0 flex-1 overflow-hidden">
          <h2 className="absolute top-[7px] left-[492px] z-10 -translate-x-1/2 rounded-[5px] bg-[#1d1f1f] px-[9px] text-[9px] leading-[20px] font-semibold text-[#aaacab]">
            Today
          </h2>

          <div className="flex flex-col gap-[10px] pr-[54px] pl-[38px]">
            <div className="flex h-[6px] w-[272px] items-end overflow-hidden rounded-b-[6px] bg-[#242626] pb-[2px] text-[9px] leading-[12px] text-[#949595]">
              <span className="ml-[48px]">0:08</span>
              <span className="ml-[119px]">18:00</span>
              <span className="ml-[24px] size-[18px] rounded-full bg-[#303232]" />
            </div>
            <Group out items={[{ lines: ["Sa vezi live location", "Sunt unde am zis"], time: "18:00" }]} />
            <Group items={[{ lines: ["nu multumesc frms"], time: "18:00" }]} />
            <Group
              out
              items={[
                {
                  lines: ["Nu mă interesează scuze", "Astea sunt dume de prosteala", "Nimeni nu lucrează cu avans în afara de tepari"],
                  time: "18:00",
                },
                { lines: ["Îți dau 5 lei avans pe revolut de vrei ... Maxim"], time: "18:01" },
              ]}
            />
            <Group
              items={[
                { lines: ["ai greșit buzunarul puiu meu"], time: "18:01" },
                { lines: ["sunt escorta dar nu ultima"], time: "18:01" },
              ]}
            />
            <VoiceMessage />
          </div>

          <div className="mt-[10px] flex h-[35px] items-center justify-center bg-black/25 pr-[18px]">
            <h2 className="rounded-full bg-[#1d1f1f] px-[9px] text-[9px] leading-[27px] font-semibold text-[#f3f5f4]">
              17 unread messages
            </h2>
          </div>

          <div className="mt-[9px] flex flex-col gap-[9px] pr-[54px] pl-[38px]">
            <Group
              items={[
                { lines: ["nu vreau sa dau tepe ca stiu ce înseamnă"], time: "18:02" },
                { lines: ["dar voi ăștia credeți ca cu 50 de lei dau teapa"], time: "18:03" },
                { lines: ["am dat tepe da de 800 de euro"], time: "18:03" },
                { lines: ["500"], time: "18:03", edited: true },
                { lines: ["atunci dai o teapa"], time: "18:03" },
              ]}
            />
            <Group
              out
              items={[
                { lines: ["am picat de prost inainte, deci sunt patit, nu mai cred in basme si balauri"], time: "18:04" },
              ]}
            />
            <Group
              items={[
                { lines: ["dar nu risc sa imi blocheze contul cu bani p el doar pentru 50 de lei"], time: "18:04" },
                { lines: ["asta spre informare ta"], time: "18:04" },
              ]}
            />
            <div className="relative h-[27px] w-[388px] self-end rounded-[6px] rounded-tr-none bg-[#144d37]">
              <Tail out />
            </div>
          </div>

          <div className="absolute top-[427px] right-0 h-[123px] w-[7px] bg-[#3b3c3c]" />
          <button
            type="button"
            aria-label="Scroll to bottom"
            className="absolute right-[10px] bottom-[14px] flex size-[35px] items-center justify-center rounded-full bg-[#242626] shadow"
          >
            <svg viewBox="0 0 14 9" className="h-[9px] w-[14px]" fill="none" stroke="#a9abaa" strokeWidth="1.6">
              <path d="M1 1.5L7 7.3L13 1.5" />
            </svg>
          </button>
        </section>

        <footer className="relative mr-[10px] mb-[5px] flex h-[42px] shrink-0 items-center rounded-full bg-[#242626] pr-[14px] pl-[11px]">
          <button type="button" aria-label="Attach">
            <svg viewBox="0 0 14 14" className="size-[14px]" stroke="#f4f5f5" strokeWidth="1.7" strokeLinecap="round">
              <path d="M7 1V13M1 7H13" />
            </svg>
          </button>
          <button type="button" aria-label="Stickers" className="ml-[16px]">
            <svg viewBox="0 0 54 54" className="size-[18px]" fill="none" stroke="#f4f5f5" strokeWidth="4.6" strokeLinecap="round" strokeLinejoin="round">
              <path d="M18 4H36Q50 4 50 18V32L32 50H18Q4 50 4 36V18Q4 4 18 4Z" />
              <path d="M50 32H42Q33 32 33 41V49" />
              <path d="M15 30Q17 39 27 38" />
              <path d="M15 30Q25 34 38 30" />
              <circle cx="19" cy="19" r="1.4" fill="#f4f5f5" />
              <circle cx="35" cy="19" r="1.4" fill="#f4f5f5" />
            </svg>
          </button>
          <input
            type="text"
            aria-label="Message"
            placeholder="Type a message"
            className="ml-[13px] min-w-0 flex-1 bg-transparent pt-px text-[12px] leading-[18px] text-[#f0f2f1] outline-none placeholder:text-[#969897]"
          />
          <button type="button" aria-label="Record voice message">
            <svg viewBox="0 0 42 54" className="h-[18px] w-[14px]" fill="none" stroke="#f4f5f5" strokeWidth="4.4">
              <path d="M21 5Q27 5 27 11V25Q27 31 21 31Q15 31 15 25V11Q15 5 21 5Z" />
              <path d="M5 25Q6 40 21 40Q36 40 37 25M21 40V50" />
            </svg>
          </button>
        </footer>
        <div className="absolute inset-x-0 bottom-0 h-px bg-[#1a0e11]" />
      </main>
      <div className="w-[2px] shrink-0 bg-[#d6d6d6]" />
    </div>
  );
}
